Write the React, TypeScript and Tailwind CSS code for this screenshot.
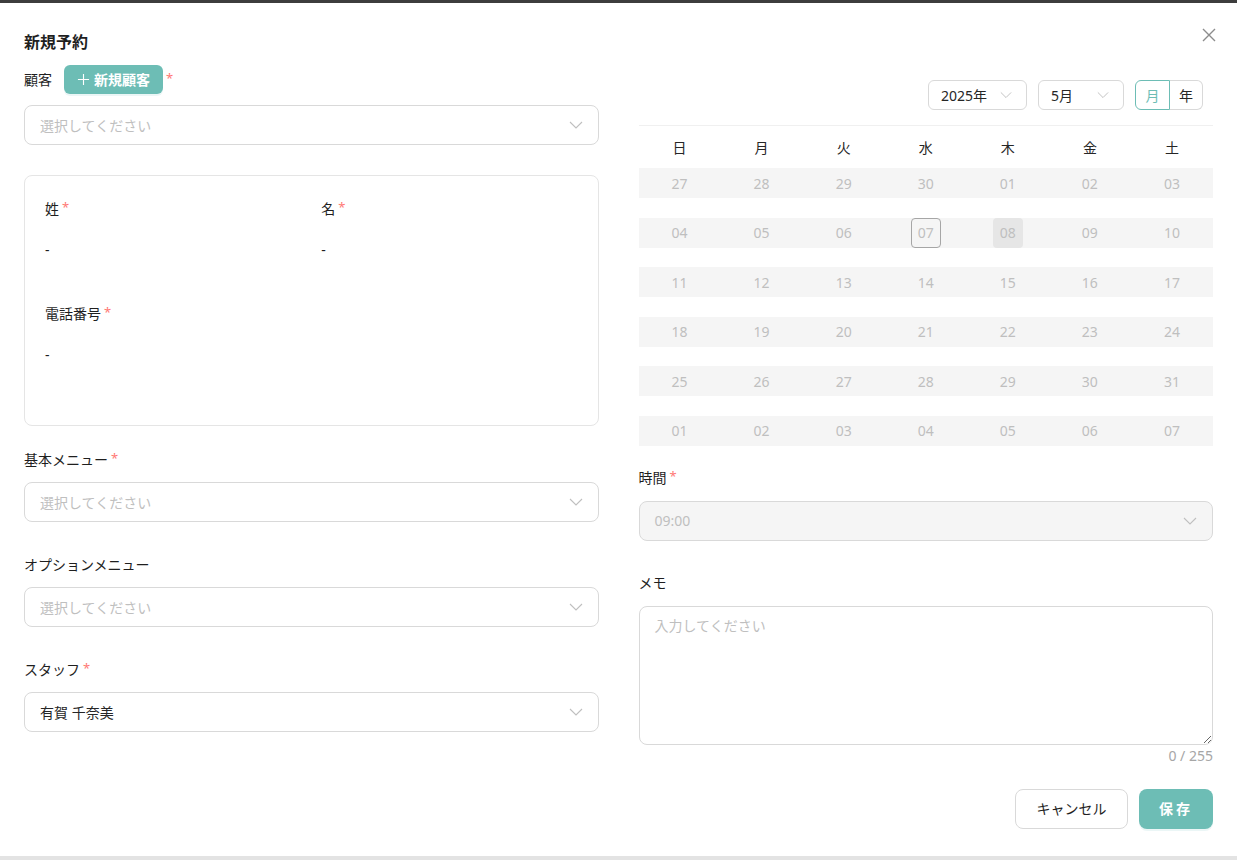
import React from 'react';

const font = { fontFamily: '"Noto Sans", "Noto Sans CJK JP", sans-serif' };

function Chevron({ className = '' }: { className?: string }) {
  return (
    <svg width="14" height="8" viewBox="0 0 14 8" fill="none" className={className}>
      <polyline points="1,1 7,7 13,1" stroke="currentColor" strokeWidth="1.1" />
    </svg>
  );
}

function Req() {
  return <span className="ml-[3px] text-[#ff7875] text-[13px] leading-none relative top-[-1px]">*</span>;
}

function Label({ text, required }: { text: string; required?: boolean }) {
  return (
    <div className="h-[22px] flex items-center text-[14px] text-[#1f1f1f]">
      {text}
      {required && <Req />}
    </div>
  );
}

function Select({ value, placeholder, disabled }: { value?: string; placeholder?: string; disabled?: boolean }) {
  return (
    <div
      className={
        'h-[40px] rounded-[8px] border border-[#d9d9d9] flex items-center justify-between pl-[15px] pr-[15px] text-[14px] ' +
        (disabled ? 'bg-[#f5f5f5]' : 'bg-white')
      }
    >
      <span className={value && !disabled ? 'text-[#262626]' : 'text-[#bfbfbf]'}>{value ?? placeholder}</span>
      <Chevron className="text-[#bfbfbf]" />
    </div>
  );
}

const weeks = [
  ['27', '28', '29', '30', '01', '02', '03'],
  ['04', '05', '06', '07', '08', '09', '10'],
  ['11', '12', '13', '14', '15', '16', '17'],
  ['18', '19', '20', '21', '22', '23', '24'],
  ['25', '26', '27', '28', '29', '30', '31'],
  ['01', '02', '03', '04', '05', '06', '07'],
];

const dayNames = ['日', '月', '火', '水', '木', '金', '土'];

function Calendar() {
  return (
    <div>
      <div className="flex justify-end items-center gap-[11px] pr-[10px] h-[30px]">
        <div className="w-[99px] h-[30px] rounded-[6px] border border-[#d9d9d9] flex items-center justify-between pl-[12px] pr-[14px] text-[14px] text-[#262626]">
          <span>2025年</span>
          <Chevron className="text-[#bfbfbf] w-[12px]" />
        </div>
        <div className="w-[86px] h-[30px] rounded-[6px] border border-[#d9d9d9] flex items-center justify-between pl-[12px] pr-[14px] text-[14px] text-[#262626]">
          <span>5月</span>
          <Chevron className="text-[#bfbfbf] w-[12px]" />
        </div>
        <div className="flex h-[30px] text-[14px]">
          <div className="w-[35px] flex items-center justify-center border border-[#6dbdb5] text-[#6dbdb5] rounded-l-[6px]">月</div>
          <div className="w-[33px] flex items-center justify-center border border-l-0 border-[#d9d9d9] text-[#262626] rounded-r-[6px]">年</div>
        </div>
      </div>
      <div className="mt-[15px] border-t border-[#f0f0f0]" />
      <div className="grid grid-cols-7 h-[42px] items-center text-[14px] text-[#262626]">
        {dayNames.map((d) => (
          <div key={d} className="text-center">{d}</div>
        ))}
      </div>
      <div className="flex flex-col gap-[19.6px]">
        {weeks.map((w, i) => (
          <div key={i} className="grid grid-cols-7 h-[30px] bg-[#f5f5f5]">
            {w.map((d, j) => {
              const isToday = i === 1 && j === 3;
              const isSel = i === 1 && j === 4;
              return (
                <div key={j} className="flex items-center justify-center">
                  <div
                    className={
                      'w-[30px] h-[30px] flex items-center justify-center text-[14px] text-[#bfbfbf] rounded-[4px] ' +
                      (isToday ? 'border border-[#a6a6a6]' : '') +
                      (isSel ? 'bg-[#e6e6e6]' : '')
                    }
                  >
                    {d}
                  </div>
                </div>
              );
            })}
          </div>
        ))}
      </div>
    </div>
  );
}

export default function App() {
  return (
    <div className="w-full h-[860px] flex flex-col overflow-hidden bg-[#e8e8e8]" style={font}>
      <div className="h-[3px] bg-[#3d3d3d]" />
      <div className="h-[853px] bg-white px-6 relative">
        {/* Header */}
        <div className="pt-[27px] h-[54px] flex items-start justify-between">
          <h1 className="text-[16px] leading-[24px] font-bold text-[#1f1f1f]">新規予約</h1>
          <button className="absolute right-[20px] top-[24px] text-[#8c8c8c]">
            <svg width="16" height="16" viewBox="0 0 16 16" fill="none">
              <path d="M2 2L14 14M14 2L2 14" stroke="currentColor" strokeWidth="1.4" />
            </svg>
          </button>
        </div>

        <div className="grid grid-cols-2 gap-x-10 mt-[8px]">
          {/* Left column */}
          <div>
            <div className="h-[29px] flex items-center text-[14px] text-[#1f1f1f]">
              <span>顧客</span>
              <button className="ml-[12px] h-[29px] w-[99px] rounded-[6px] bg-[#6dbdb5] text-white font-bold text-[14px] flex items-center justify-center gap-[4px] shadow-[0_2px_0_rgba(5,145,140,0.08)]">
                <svg width="13" height="13" viewBox="0 0 14 14" fill="none">
                  <path d="M7 1V13M1 7H13" stroke="currentColor" strokeWidth="1.2" />
                </svg>
                新規顧客
              </button>
              <Req />
            </div>
            <div className="mt-[11px]">
              <Select placeholder="選択してください" />
            </div>

            <div className="mt-[30px] h-[251px] rounded-[8px] border border-[#e5e5e5] px-[20px] pt-[21px]">
              <div className="grid grid-cols-2 gap-x-5">
                <div>
                  <Label text="姓" required />
                  <div className="mt-[20px] h-[22px] text-[14px] text-[#1f1f1f] leading-[22px]">-</div>
                </div>
                <div>
                  <Label text="名" required />
                  <div className="mt-[20px] h-[22px] text-[14px] text-[#1f1f1f] leading-[22px]">-</div>
                </div>
              </div>
              <div className="mt-[41px]">
                <Label text="電話番号" required />
                <div className="mt-[20px] h-[22px] text-[14px] text-[#1f1f1f] leading-[22px]">-</div>
              </div>
            </div>

            <div className="mt-[22px]">
              <Label text="基本メニュー" required />
              <div className="mt-[12px]">
                <Select placeholder="選択してください" />
              </div>
            </div>
            <div className="mt-[31px]">
              <Label text="オプションメニュー" />
              <div className="mt-[12px]">
                <Select placeholder="選択してください" />
              </div>
            </div>
            <div className="mt-[31px]">
              <Label text="スタッフ" required />
              <div className="mt-[12px]">
                <Select value="有賀 千奈美" />
              </div>
            </div>
          </div>

          {/* Right column */}
          <div className="pt-[15px]">
            <Calendar />
            <div className="mt-[21px]">
              <Label text="時間" required />
              <div className="mt-[12px]">
                <Select value="09:00" disabled />
              </div>
            </div>
            <div className="mt-[31px]">
              <Label text="メモ" />
              <textarea
                className="mt-[12px] block w-full h-[139px] rounded-[8px] border border-[#d9d9d9] px-[15px] py-[8px] text-[14px] text-[#262626] placeholder:text-[#bfbfbf] outline-none resize-y"
                placeholder="入力してください"
              />
              <div className="h-[22px] text-right text-[14px] leading-[22px] text-[#a6a6a6]">0 / 255</div>
            </div>
            <div className="mt-[22px] flex justify-end gap-[11px]">
              <button className="h-[40px] w-[113px] rounded-[8px] border border-[#d9d9d9] bg-white text-[14px] text-[#1f1f1f]">
                キャンセル
              </button>
              <button className="h-[40px] w-[74px] rounded-[8px] bg-[#6dbdb5] text-white text-[14px] font-bold tracking-[3px] shadow-[0_2px_0_rgba(5,145,140,0.08)]">
                保存
              </button>
            </div>
          </div>
        </div>
      </div>
      <div className="h-[4px] bg-[#e3e3e3]" />
    </div>
  );
}
